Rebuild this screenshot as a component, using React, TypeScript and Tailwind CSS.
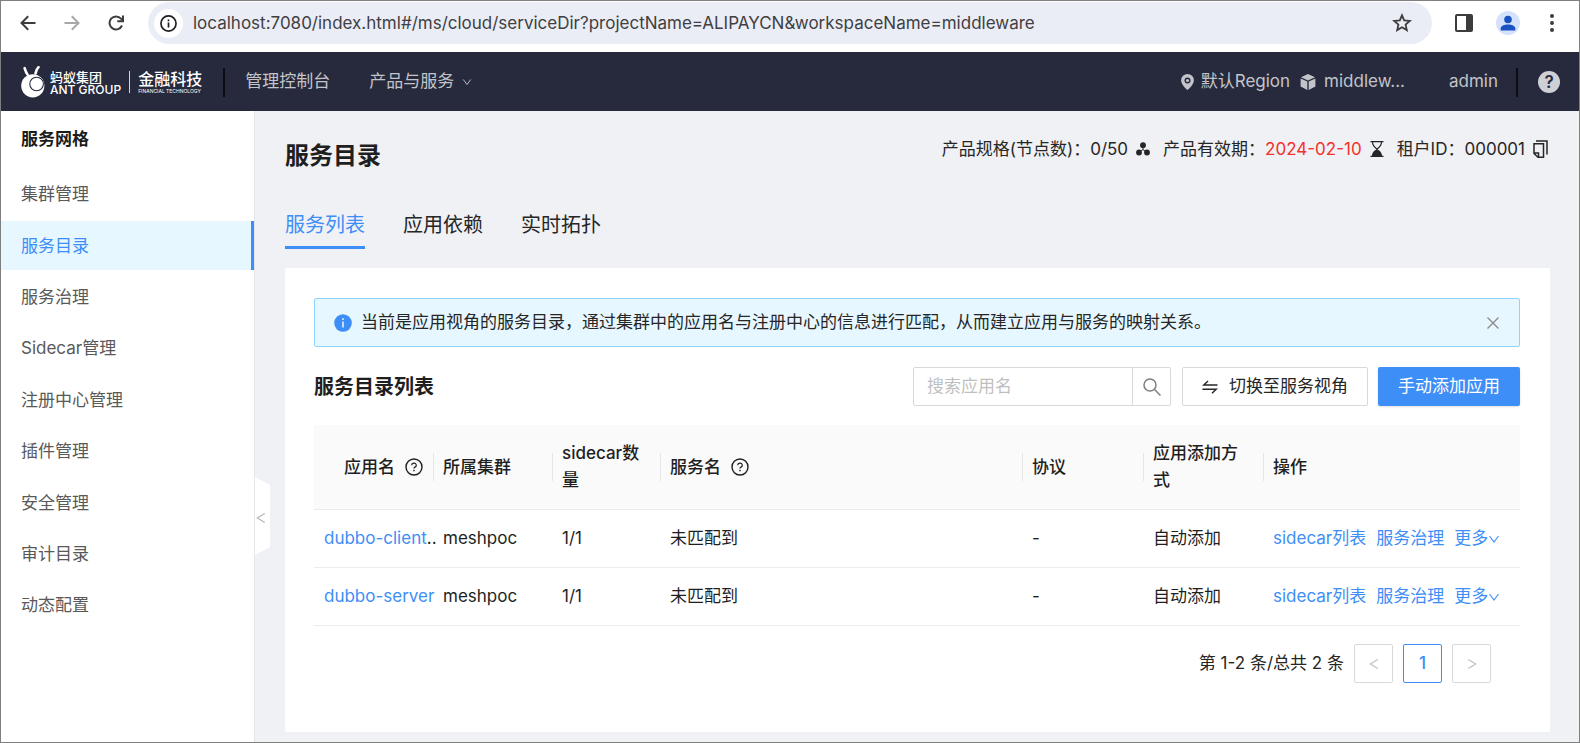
import type { ReactNode } from "react";

const menu = ["集群管理", "服务目录", "服务治理", "Sidecar管理", "注册中心管理", "插件管理", "安全管理", "审计目录", "动态配置"];
const tabs = ["服务列表", "应用依赖", "实时拓扑"];
const rows = [
  { name: "dubbo-client", suffix: "..", cluster: "meshpoc", count: "1/1", service: "未匹配到", protocol: "-", mode: "自动添加" },
  { name: "dubbo-server", suffix: "", cluster: "meshpoc", count: "1/1", service: "未匹配到", protocol: "-", mode: "自动添加" },
];

function Chevron({ className, d = "M2 4l6 8 6-8" }: { className: string; d?: string }) {
  return (
    <svg viewBox="0 0 16 16" className={className} fill="none" stroke="currentColor" strokeWidth="1.5" aria-hidden="true">
      <path d={d} />
    </svg>
  );
}

function BackArrow({ className }: { className: string }) {
  return (
    <svg viewBox="0 0 16 16" className={className} fill="none" stroke="currentColor" strokeWidth="2" aria-hidden="true">
      <path d="M15.500 8H2M8.200 1.200L1.500 8l6.700 6.800" />
    </svg>
  );
}

function HelpCircle() {
  return (
    <svg viewBox="0 0 18 18" className="size-[18px] shrink-0" fill="none" stroke="currentColor" strokeWidth="1.400" aria-hidden="true">
      <circle cx="9" cy="9" r="8" />
      <path d="M6.700 7.200a2.300 2.100 0 1 1 3.300 1.900c-.7.300-1 .7-1 1.500" strokeWidth="1.200" />
      <path d="M9 11.800v1.400" />
    </svg>
  );
}

function BrowserBar() {
  return (
    <div className="flex h-[51px] items-start bg-white text-[#3c3c3c]">
      <div className="flex h-[44px] flex-1 items-center">
        <button aria-label="后退" className="ml-[19px] flex size-4 items-center justify-center"><BackArrow className="size-4" /></button>
        <button aria-label="前进" className="ml-7 flex size-4 items-center justify-center text-[#a8a8a8]"><BackArrow className="size-4 rotate-180" /></button>
        <button aria-label="刷新" className="ml-7 size-4">
          <svg viewBox="0 0 16 16" className="size-4" fill="none" stroke="currentColor" strokeWidth="2" aria-hidden="true">
            <path d="M14 10.500A6.500 6.500 0 1 1 13 3.700L14.500 5.300" />
            <path d="M15 .5v5.700H9.300" />
          </svg>
        </button>
        <div className="ml-6 flex h-[42px] flex-1 items-center rounded-full bg-[#ebedf6] pr-5 pl-1.5">
          <span className="flex size-[29px] items-center justify-center rounded-full bg-white text-[#1f1f1f]">
            <svg viewBox="0 0 16 16" className="size-[17px]" fill="none" stroke="currentColor" strokeWidth="1.600" aria-hidden="true">
              <circle cx="8" cy="8" r="7.100" />
              <path d="M8 7v4.700M8 4.200v1.700" />
            </svg>
          </span>
          <input aria-label="地址" readOnly className="ml-2.5 min-w-0 flex-1 bg-transparent pt-0.5 text-[17px] text-[#3f4042] outline-none" defaultValue="localhost:7080/index.html#/ms/cloud/serviceDir?projectName=ALIPAYCN&workspaceName=middleware" />
          <button aria-label="收藏">
            <svg viewBox="0 0 20 20" className="size-5" fill="none" stroke="currentColor" strokeWidth="1.800" aria-hidden="true">
              <path d="M10 2.300l2.200 5.100 5.600.5-4.200 3.700 1.200 5.500-4.800-2.900-4.800 2.900 1.200-5.500-4.200-3.700 5.600-.5z" />
            </svg>
          </button>
        </div>
        <button aria-label="侧边栏" className="ml-[23px]">
          <svg viewBox="0 0 18 18" className="size-[18px]" aria-hidden="true">
            <rect x="1" y="1" width="16" height="16" rx="1" fill="none" stroke="currentColor" strokeWidth="2" />
            <path d="M11 1h6v16h-6z" fill="currentColor" />
          </svg>
        </button>
        <button aria-label="用户" className="ml-[23px]">
          <svg viewBox="0 0 24 24" className="size-6" aria-hidden="true">
            <circle cx="12" cy="12" r="12" fill="#d5e2fb" />
            <circle cx="12" cy="8.500" r="3.800" fill="#1a52c4" />
            <path d="M4.700 19.500v-2c0-2.600 3.700-3.900 7.300-3.900s7.300 1.300 7.300 3.900v2z" fill="#1a52c4" />
          </svg>
        </button>
        <button aria-label="更多选项" className="mr-[25px] ml-[30px]">
          <svg viewBox="0 0 4 18" className="h-[18px] w-1" fill="currentColor" aria-hidden="true">
            <circle cx="2" cy="2" r="2" /><circle cx="2" cy="9" r="2" /><circle cx="2" cy="16" r="2" />
          </svg>
        </button>
      </div>
    </div>
  );
}

function Logo() {
  return (
    <div className="flex items-center text-white">
      <svg viewBox="0 0 24 32" className="h-8 w-6" aria-hidden="true">
        <circle cx="11.800" cy="19.800" r="11.600" fill="currentColor" />
        <circle cx="15.600" cy="18" r="6.800" fill="#fff" stroke="#272a3d" strokeWidth="1.100" />
        <path d="M6.500 8.500C5.200 7 4.300 4.500 3.600 2.200M14.500 7.500c.3-2.200 1.200-4.500 3-6.300" fill="none" stroke="currentColor" strokeWidth="2.600" strokeLinecap="round" />
      </svg>
      <div className="ml-[5px]">
        <div className="text-[13px] leading-[14px] font-medium">蚂蚁集团</div>
        <div className="text-[12px] leading-[11px] font-medium">ANT GROUP</div>
      </div>
      <span className="ml-2 h-[22px] w-px bg-white/80" />
      <div className="ml-2">
        <div className="text-[16px] leading-[18px] font-medium">金融科技</div>
        <div className="text-[5px] leading-[6px]">FINANCIAL TECHNOLOGY</div>
      </div>
    </div>
  );
}

function Header() {
  return (
    <header className="flex h-[59px] items-center bg-[#272a3d] pt-px pr-[19px] pl-5 text-[17px] text-[#c3c4ca]">
      <Logo />
      <span className="ml-[21px] h-[29px] w-0.5 bg-[#0c0d14]" />
      <nav className="ml-5 flex items-center gap-[39px]">
        <a href="#console">管理控制台</a>
        <button className="flex items-center gap-2">产品与服务<Chevron className="size-[10px]" /></button>
      </nav>
      <div className="ml-auto flex items-center">
        <svg viewBox="0 0 13 16" className="mr-[7px] h-4 w-[13px]" aria-hidden="true">
          <path d="M6.500 0A6.400 6.400 0 0 0 .1 6.400C.1 10.600 6.500 16 6.500 16s6.400-5.400 6.400-9.600A6.400 6.400 0 0 0 6.500 0z" fill="currentColor" />
          <circle cx="6.500" cy="6.500" r="2.300" fill="none" stroke="#272a3d" strokeWidth="1.400" />
        </svg>
        <span>默认Region</span>
        <svg viewBox="0 0 16 16" className="mr-2 ml-2.5 size-4" fill="currentColor" aria-hidden="true">
          <path d="M8 0l7 3.200-7 3.300-7-3.300zM.6 4.500l6.700 3.100V16L.6 12.600zM15.400 4.500L8.700 7.600V16l6.700-3.400z" />
        </svg>
        <span>middlew...</span>
        <span className="ml-11">admin</span>
        <span className="ml-[18px] h-[29px] w-0.5 bg-[#0c0d14]" />
        <button aria-label="帮助" className="ml-5 flex size-[22px] items-center justify-center rounded-full bg-[#cfcfd6] text-[17px] leading-[22px] font-semibold text-[#272a3d]">?</button>
      </div>
    </header>
  );
}

function Sidebar() {
  return (
    <aside className="relative w-[254px] shrink-0 border-r border-[#e4e5e9] bg-white pt-[15px]">
      <h2 className="px-5 leading-[26px] font-semibold text-[#1c1c1c]">服务网格</h2>
      <nav className="mt-[18px] flex min-h-[460px] flex-col justify-between">
        {menu.map((item) => (
          <a key={item} href={"#" + item} className={item === "服务目录" ? "flex h-[49px] items-center border-r-3 border-[#3e8ef7] bg-[#e6f7ff] px-5 pt-px text-[#3e8ef7]" : "flex h-[49px] items-center px-5 pt-px text-[#595959]"}>
            {item}
          </a>
        ))}
      </nav>
      <button aria-label="收起菜单" className="absolute top-[366px] -right-4 flex h-[78px] w-[15px] items-center justify-center bg-white pt-1 pr-1 text-[#b5b5b5] [clip-path:polygon(0_0,100%_10%,100%_90%,0_100%)]">
        <Chevron className="size-3 shrink-0" d="M13 2L3 8l10 6" />
      </button>
    </aside>
  );
}

function Th({ children, divider = true }: { children: ReactNode; divider?: boolean }) {
  return (
    <th className="relative px-2.5 py-[15px] text-left font-medium">
      {divider && <span className="absolute top-7 left-0 h-7 w-px bg-[#e6e6e6]" />}
      {children}
    </th>
  );
}

function ServiceTable() {
  return (
    <table className="mt-[19px] w-full table-fixed leading-[27px] text-[#1f1f1f]">
      <colgroup>
        <col className="w-[119px]" />
        <col className="w-[119px]" />
        <col className="w-[108px]" />
        <col />
        <col className="w-[121px]" />
        <col className="w-[120px]" />
        <col className="w-[257px]" />
      </colgroup>
      <thead>
        <tr className="border-b border-[#ececec] bg-[#fafafa]">
          <Th divider={false}><span className="flex items-center justify-end gap-[10px] whitespace-nowrap">应用名<HelpCircle /></span></Th>
          <Th>所属集群</Th>
          <Th>sidecar数量</Th>
          <Th><span className="flex items-center gap-[10px]">服务名<HelpCircle /></span></Th>
          <Th>协议</Th>
          <Th>应用添加方式</Th>
          <Th>操作</Th>
        </tr>
      </thead>
      <tbody>
        {rows.map((r) => (
          <tr key={r.name} className="border-b border-[#ececec]">
            <td className="py-[15px] pl-2.5 whitespace-nowrap"><a href={"#" + r.name} className="text-[#3e8ef7]">{r.name}</a>{r.suffix}</td>
            <td className="px-2.5">{r.cluster}</td>
            <td className="px-2.5">{r.count}</td>
            <td className="px-2.5">{r.service}</td>
            <td className="px-2.5">{r.protocol}</td>
            <td className="px-2.5">{r.mode}</td>
            <td className="px-2.5">
              <div className="flex items-center gap-2.5 whitespace-nowrap text-[#3e8ef7]">
                <a href="#sidecar">sidecar列表</a>
                <a href="#govern">服务治理</a>
                <button className="flex items-center">更多<Chevron className="size-3" /></button>
              </div>
            </td>
          </tr>
        ))}
      </tbody>
    </table>
  );
}

function ProductInfo() {
  return (
    <div className="flex items-center pr-0.5 leading-[22px]">
      <span>产品规格(节点数)：0/50</span>
      <svg viewBox="0 0 14 14" className="mr-[13px] ml-2 size-[14px]" fill="currentColor" aria-hidden="true">
        <circle cx="7" cy="3.200" r="2.900" /><circle cx="3" cy="10.500" r="2.900" /><circle cx="11" cy="10.500" r="2.900" />
        <path d="M7 3.500v4L3.300 10.300M7 7.500l3.700 2.800" fill="none" stroke="currentColor" />
      </svg>
      <span>产品有效期：<span className="text-[#f5302a]">2024-02-10</span></span>
      <svg viewBox="0 0 14 16" className="mr-[13px] ml-2 h-4 w-[14px]" aria-hidden="true">
        <path d="M.5.700h13M.5 15.300h13M2.500 1c0 4 2.500 5.500 4.500 7 2-1.500 4.500-3 4.500-7" fill="none" stroke="currentColor" strokeWidth="1.200" />
        <path d="M2 15c0-4 2.800-5.500 5-7 2.200 1.500 5 3 5 7z" fill="currentColor" />
      </svg>
      <span>租户ID：000001</span>
      <button aria-label="复制" className="ml-2">
        <svg viewBox="0 0 15 18" className="h-[18px] w-[15px]" fill="none" stroke="currentColor" strokeWidth="1.500" aria-hidden="true">
          <path d="M1 3.800h9.500v13.400H5L1 13.500zM1 13h4.500v4M3 1h11v13.500" />
        </svg>
      </button>
    </div>
  );
}

function Pagination() {
  return (
    <div className="mt-[18px] flex items-center justify-end gap-2.5 pr-[29px]">
      <span>第 1-2 条/总共 2 条</span>
      <button aria-label="上一页" className="flex size-[39px] items-center justify-center rounded-xs border border-[#d9d9d9] text-[#bfbfbf]"><Chevron className="size-3" d="M13 2L3 8l10 6" /></button>
      <button className="size-[39px] rounded-xs border border-[#3e8ef7] font-medium text-[#3e8ef7]">1</button>
      <button aria-label="下一页" className="flex size-[39px] items-center justify-center rounded-xs border border-[#d9d9d9] text-[#bfbfbf]"><Chevron className="size-3" d="M3 2l10 6-10 6" /></button>
    </div>
  );
}

export default function App() {
  return (
    <div className="flex min-h-screen flex-col border border-[#7f7f7f] bg-[#f0f1f5] font-['Inter','Noto_Sans_CJK_SC',sans-serif] text-[17px] text-[#262626]">
      <BrowserBar />
      <Header />
      <div className="flex flex-1">
        <Sidebar />
        <main className="flex min-w-0 flex-1 flex-col pt-[27px] pr-[29px] pb-2.5 pl-[30px]">
          <div className="flex items-start justify-between">
            <h1 className="text-[24px] leading-[36px] font-semibold text-[#1f1f1f]">服务目录</h1>
            <ProductInfo />
          </div>
          <div role="tablist" className="mt-[37px] flex gap-[38px] text-[20px] leading-[28px]">
            {tabs.map((t, i) => (
              <button key={t} role="tab" aria-selected={i === 0} className={i === 0 ? "border-b-3 border-[#3e8ef7] pb-[7px] text-[#3e8ef7]" : "border-b-3 border-transparent pb-[7px]"}>{t}</button>
            ))}
          </div>
          <section className="mt-[19px] flex-1 rounded-xs bg-white pt-[30px] pr-[30px] pl-[29px]">
            <div role="alert" className="flex h-[49px] items-center rounded-xs border border-[#91d5ff] bg-[#e6f7ff] pr-5 pl-[19px]">
              <svg viewBox="0 0 18 18" className="mr-[9px] size-[18px]" aria-hidden="true">
                <circle cx="9" cy="9" r="8.800" fill="#3e8ef7" />
                <path d="M9 7.500v6M9 4.300v1.600" stroke="#fff" strokeWidth="1.400" />
              </svg>
              <p className="flex-1">当前是应用视角的服务目录，通过集群中的应用名与注册中心的信息进行匹配，从而建立应用与服务的映射关系。</p>
              <button aria-label="关闭" className="text-[#8c8c8c]">
                <svg viewBox="0 0 12 12" className="size-3" fill="none" stroke="currentColor" strokeWidth="1.400" aria-hidden="true"><path d="M.5.500l11 11M11.500.500l-11 11" /></svg>
              </button>
            </div>
            <div className="mt-5 flex items-center">
              <h3 className="text-[20px] font-semibold text-[#1f1f1f]">服务目录列表</h3>
              <div className="ml-auto flex h-[39px] w-[258px] rounded-xs border border-[#d9d9d9]">
                <input aria-label="搜索应用名" placeholder="搜索应用名" className="min-w-0 flex-1 px-[13px] outline-none placeholder:text-[#bfbfbf]" />
                <button aria-label="搜索" className="flex w-[38px] items-center justify-center border-l border-[#d9d9d9] text-[#7f7f7f]">
                  <svg viewBox="0 0 18 18" className="size-[18px]" fill="none" stroke="currentColor" strokeWidth="1.500" aria-hidden="true">
                    <circle cx="7" cy="7" r="6" /><path d="M11.300 11.300l6.200 6.200" />
                  </svg>
                </button>
              </div>
              <button className="ml-[11px] flex h-[39px] items-center gap-[11px] rounded-xs border border-[#d9d9d9] px-[19px]">
                <svg viewBox="0 0 16 16" className="size-4" fill="none" stroke="currentColor" strokeWidth="1.500" aria-hidden="true">
                  <path d="M15.500 6H1.800L6 2M.5 10.200h13.700L10 14.200" />
                </svg>
                切换至服务视角
              </button>
              <button className="ml-2.5 h-[39px] rounded-xs bg-[#3e8ef7] px-5 text-white shadow-sm">手动添加应用</button>
            </div>
            <ServiceTable />
            <Pagination />
          </section>
        </main>
      </div>
    </div>
  );
}
